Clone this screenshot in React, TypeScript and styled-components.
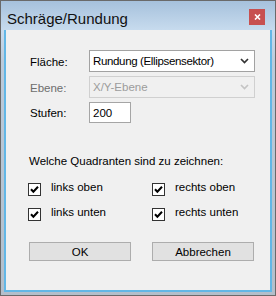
import React from "react";
import styled, { createGlobalStyle } from "styled-components";

const Global = createGlobalStyle`
  html, body { margin: 0; padding: 0; background: #ffffff; }
  body { font-family: "Liberation Sans", Arial, sans-serif; }
`;

const Window = styled.div`
  width: 276px;
  height: 296px;
  box-sizing: border-box;
  border: 1px solid #6a6a6a;
  background: linear-gradient(to bottom, #a6c1dc 0px, #c7dbee 29px, #bccbdb 60px, #b3bfcb 100%);
  display: flex;
  flex-direction: column;
`;

const TitleBar = styled.div`
  height: 29px;
  flex: none;
  display: flex;
  align-items: flex-start;
  justify-content: space-between;
  padding: 0 10px 0 6px;
  box-sizing: border-box;
`;

const Title = styled.div`
  margin-top: 9px;
  font-size: 15px;
  line-height: 17px;
  color: #111;
`;

const CloseButton = styled.div`
  margin-top: 8px;
  width: 16px;
  height: 16px;
  background: #c75050;
  display: flex;
  align-items: center;
  justify-content: center;
`;

const FrameBody = styled.div`
  flex: 1;
  padding: 0 3px 3px 3px;
  display: flex;
`;

const Client = styled.div`
  flex: 1;
  background: #f0f0f0;
  border: 2px solid #62b7e6;
  border-top: none;
  display: flex;
  flex-direction: column;
  font-size: 11.5px;
  line-height: 14px;
  color: #000;
`;

const Form = styled.div`
  margin: 20px 0 0 24px;
  display: grid;
  grid-template-columns: 59px 166px;
  grid-template-rows: 22px 22px 21px;
  row-gap: 4px;
  align-items: center;
`;

const Label = styled.div<{ $disabled?: boolean }>`
  color: ${(p) => (p.$disabled ? "#6d6d6d" : "#000")};
  margin-top: 1px;
`;

const Combo = styled.div<{ $disabled?: boolean; $tight?: boolean }>`
  height: 22px;
  box-sizing: border-box;
  border: 1px solid ${(p) => (p.$disabled ? "#d0d0d0" : "#a2a2a2")};
  background: ${(p) => (p.$disabled ? "#f0f0f0" : "#ffffff")};
  color: ${(p) => (p.$disabled ? "#9c9c9c" : "#000")};
  display: flex;
  align-items: center;
  justify-content: space-between;
  padding: 0 5px 0 3px;
  letter-spacing: ${(p) => (p.$tight ? "-0.35px" : "0")};
`;

const Input = styled.div`
  width: 42px;
  height: 21px;
  box-sizing: border-box;
  border: 1px solid #a5a5a5;
  background: #fff;
  display: flex;
  align-items: center;
  padding-left: 3px;
`;

const Question = styled.div`
  margin: 31px 0 0 23px;
`;

const Checks = styled.div`
  margin: 12px 0 0 22px;
  display: grid;
  grid-template-columns: 124px 100px;
  grid-auto-rows: 16px;
  row-gap: 9px;
`;

const CheckRow = styled.div`
  display: flex;
  align-items: flex-start;
  gap: 10px;
`;

const Box = styled.div`
  margin-top: 3px;
  width: 13px;
  height: 13px;
  box-sizing: border-box;
  border: 1px solid #333333;
  background: #ffffff;
  display: flex;
  align-items: center;
  justify-content: center;
`;

const Buttons = styled.div`
  margin: 21px 0 0 23px;
  display: flex;
  gap: 21px;
`;

const Button = styled.div`
  width: 102px;
  height: 19px;
  box-sizing: border-box;
  border: 1px solid #adadad;
  background: #e1e1e1;
  display: flex;
  align-items: center;
  justify-content: center;
`;

const Chevron = ({ color }: { color: string }) => (
  <svg width="9" height="6" viewBox="0 0 9 6">
    <path d="M1 1 L4.5 4.5 L8 1" fill="none" stroke={color} strokeWidth="1.7" />
  </svg>
);

const CheckMark = () => (
  <svg width="11" height="11" viewBox="0 0 11 11">
    <path d="M2 5.2 L4.4 7.8 L9 2.8" fill="none" stroke="#000" strokeWidth="2" />
  </svg>
);

const CheckItem = ({ label }: { label: string }) => (
  <CheckRow>
    <Box>
      <CheckMark />
    </Box>
    <span>{label}</span>
  </CheckRow>
);

export default function App() {
  return (
    <>
      <Global />
      <Window>
        <TitleBar>
          <Title>Schräge/Rundung</Title>
          <CloseButton>
            <svg width="7" height="6" viewBox="0 0 7 6">
              <path d="M1 0.5 L6 5.5 M6 0.5 L1 5.5" stroke="#fff" strokeWidth="1.6" />
            </svg>
          </CloseButton>
        </TitleBar>
        <FrameBody>
          <Client>
            <Form>
              <Label>Fläche:</Label>
              <Combo $tight>
                <span>Rundung (Ellipsensektor)</span>
                <Chevron color="#333" />
              </Combo>
              <Label $disabled>Ebene:</Label>
              <Combo $disabled>
                <span>X/Y-Ebene</span>
                <Chevron color="#c4c4c4" />
              </Combo>
              <Label>Stufen:</Label>
              <Input>200</Input>
            </Form>
            <Question>Welche Quadranten sind zu zeichnen:</Question>
            <Checks>
              <CheckItem label="links oben" />
              <CheckItem label="rechts oben" />
              <CheckItem label="links unten" />
              <CheckItem label="rechts unten" />
            </Checks>
            <Buttons>
              <Button>OK</Button>
              <Button>Abbrechen</Button>
            </Buttons>
          </Client>
        </FrameBody>
      </Window>
    </>
  );
}
